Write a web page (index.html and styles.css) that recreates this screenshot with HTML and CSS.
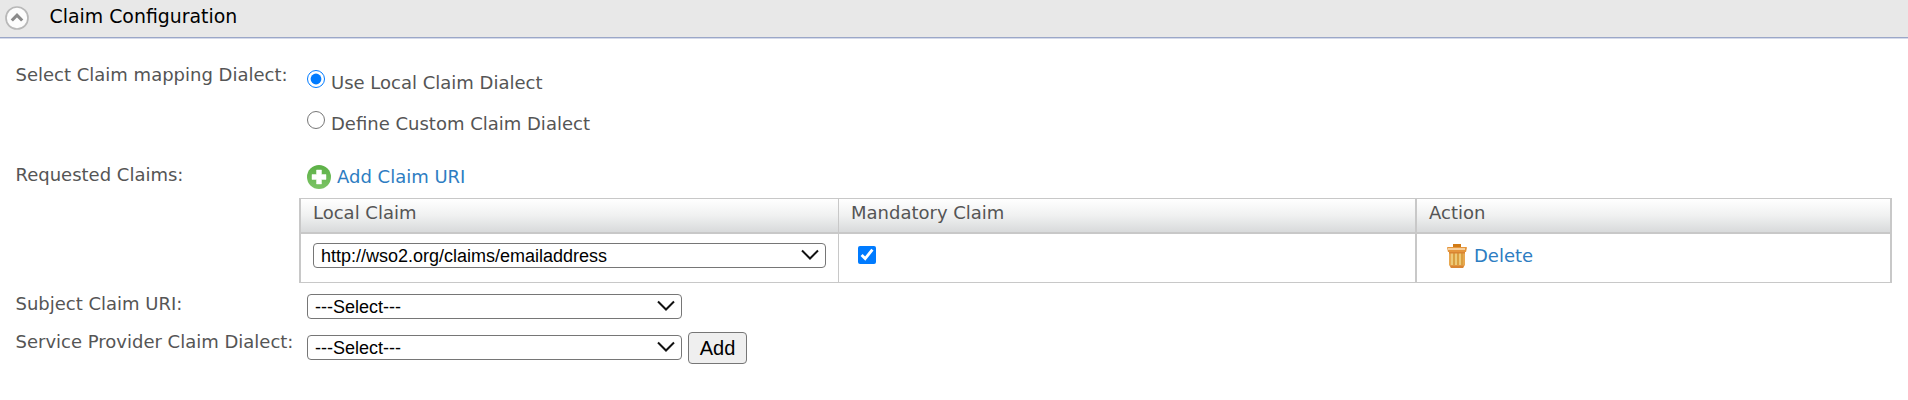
FILE: index.html
```
<!DOCTYPE html>
<html lang="en">
<head>
<meta charset="utf-8">
<title>Claim Configuration</title>
<link rel="stylesheet" href="styles.css">
</head>
<body>
<h2 class="section-title">
  <svg class="toggle-icon" width="24" height="24" viewBox="0 0 24 24">
    <circle cx="12" cy="12" r="11" fill="#fcfcfc" stroke="#b8b8b8" stroke-width="1.7"/>
    <path d="M6.800 14.500 12 9.200l5.200 5.300" fill="none" stroke="#8a8a8a" stroke-width="3.200"/>
  </svg>
  <span>Claim Configuration</span>
</h2>
<form class="claims">
  <div class="row row-dialect">
    <div class="label">Select Claim mapping Dialect:</div>
    <div class="field">
      <label class="radio"><input type="radio" name="dialect" checked><span>Use Local Claim Dialect</span></label>
      <label class="radio"><input type="radio" name="dialect"><span>Define Custom Claim Dialect</span></label>
    </div>
  </div>
  <div class="row row-requested">
    <div class="label">Requested Claims:</div>
    <div class="field">
      <a class="link add-link">
        <svg width="24" height="24" viewBox="0 0 24 24">
          <defs><linearGradient id="green" x1="0" y1="0" x2="0" y2="1"><stop offset="0" stop-color="#5cb046"/><stop offset="1" stop-color="#7cc466"/></linearGradient></defs>
          <circle cx="12" cy="12" r="12" fill="url(#green)"/>
          <path d="M9.500 5h5v4.500H19v5h-4.500V19h-5v-4.500H5v-5h4.500z" fill="#fff" stroke="#fff" stroke-opacity=".45" stroke-linejoin="round"/>
        </svg>
        <span>Add Claim URI</span>
      </a>
    </div>
  </div>
  <div class="claim-table">
    <div class="th">Local Claim</div>
    <div class="th">Mandatory Claim</div>
    <div class="th">Action</div>
    <div class="td">
      <div class="select select-wide">
        <select><option>http://wso2.org/claims/emailaddress</option></select>
        <svg width="18" height="12" viewBox="0 0 18 12"><path d="M1 1.500 9 9.500l8-8" fill="none" stroke="#111" stroke-width="2"/></svg>
      </div>
    </div>
    <div class="td td-check"><input type="checkbox" checked></div>
    <div class="td td-action">
      <a class="link">
        <svg width="20" height="24" viewBox="0 0 20 24">
          <path d="M6 0h8v4H6z" fill="#d17a14"/>
          <path d="M0 3.500Q0 3 1 3h18q1 0 1 .500L19 8H1z" fill="#e5963c"/><path d="M1 4h17v2H1z" fill="#f6cf9c"/>
          <path d="M2 8h16v13l-2 3H4l-2-3z" fill="#e8a850"/>
          <path d="M5 9v12M9 9v12M13 9v12" stroke="#eed080" stroke-width="1.700"/>
          <path d="M7 9v12M11 9v12M15 9v12" stroke="#d39a38" stroke-width="1.300"/>
          <path d="M2 8h16v1.500H2zM3 21.500h14L16 24H4z" fill="#d98432"/>
        </svg>
        <span>Delete</span>
      </a>
    </div>
  </div>
  <div class="row row-subject">
    <div class="label">Subject Claim URI:</div>
    <div class="field">
      <div class="select"><select><option>---Select---</option></select>
        <svg width="18" height="12" viewBox="0 0 18 12"><path d="M1 1.500 9 9.500l8-8" fill="none" stroke="#111" stroke-width="2"/></svg></div>
    </div>
  </div>
  <div class="row row-provider">
    <div class="label">Service Provider Claim Dialect:</div>
    <div class="field">
      <div class="select"><select><option>---Select---</option></select>
        <svg width="18" height="12" viewBox="0 0 18 12"><path d="M1 1.500 9 9.500l8-8" fill="none" stroke="#111" stroke-width="2"/></svg></div>
      <button class="button" type="button">Add</button>
    </div>
  </div>
</form>
</body>
</html>
```
FILE: styles.css
```
* { box-sizing: border-box; }
body { margin: 0; background: #fff; color: #555; font: 18px/22px "DejaVu Sans", sans-serif; }
svg { display: block; flex: none; }
input { margin: 0; width: 18px; height: 18px; flex: none; accent-color: #007bff; }
.section-title { display: flex; align-items: flex-start; gap: 20.5px; height: 38px; margin: 0 0 1px; padding: 5px 0 0 5px; background: #e8e8e8; border-bottom: 1px solid #9ba7c8; box-shadow: 0 1px #d5daea; color: #000; font-size: 18.9px; font-weight: 400; line-height: 23px; }
.toggle-icon { margin-top: 1px; }
.row { display: grid; grid-template-columns: 291.5px 1fr; padding-left: 15.5px; }
.label { white-space: nowrap; }
.row-dialect { height: 100px; padding-top: 25px; }
.row-dialect .field { display: flex; flex-direction: column; gap: 19px; padding-top: 6px; }
.radio { display: flex; gap: 6px; height: 22px; }
.radio span { padding-top: 2px; }
.row-requested { height: 59px; padding-top: 25px; }
.link { display: flex; align-items: center; color: #2d7dc2; }
.add-link { gap: 6px; height: 26px; }
.claim-table { display: grid; grid-template: 35px 49px / 539px 577px 477px; width: 1593px; margin-left: 299px; border-top: 1px solid #c8c8c8; }
.th { padding: 3px 12px; border-bottom: 2px solid #c8c8c8; background: linear-gradient(#fff, #f0f1f1 50%, #d8dadb); }
.th, .td { border-left: 1px solid #c8c8c8; }
.td { padding: 9px 12px; border-bottom: 1px solid #c8c8c8; }
.th:nth-child(3n+1), .td:nth-child(3n+1) { border-left-width: 2px; }
.th:nth-child(3n), .td:nth-child(3n) { border-left-width: 2px; border-right: 2px solid #c8c8c8; }
.td-check { padding: 12px 19px; }
.td-action { padding: 10px 30px; }
.td-action .link { gap: 7px; height: 24px; }
.select { display: grid; width: 375px; height: 25px; }
.select-wide { width: 513px; }
.select select, .select svg { grid-area: 1 / 1; }
.select select { appearance: none; width: 100%; height: 25px; margin: 0; padding: 0 7px; border: 1px solid #767676; border-radius: 4px; background: #fff; color: #000; font: 18px "Liberation Sans", sans-serif; }
.select svg { justify-self: end; margin: 6px 7px 0 0; pointer-events: none; }
.row-subject { height: 46px; padding-top: 10px; }
.row-subject .field { padding-top: 1px; }
.row-provider { padding-top: 2px; }
.row-provider .field { display: flex; gap: 6px; padding-top: 1px; }
.row-provider .select { margin-top: 3px; }
.button { width: 59px; height: 32px; margin: 0; padding: 0; border: 1px solid #767676; border-radius: 4px; background: #efefef; color: #000; font: 20px "Liberation Sans", sans-serif; }
```
